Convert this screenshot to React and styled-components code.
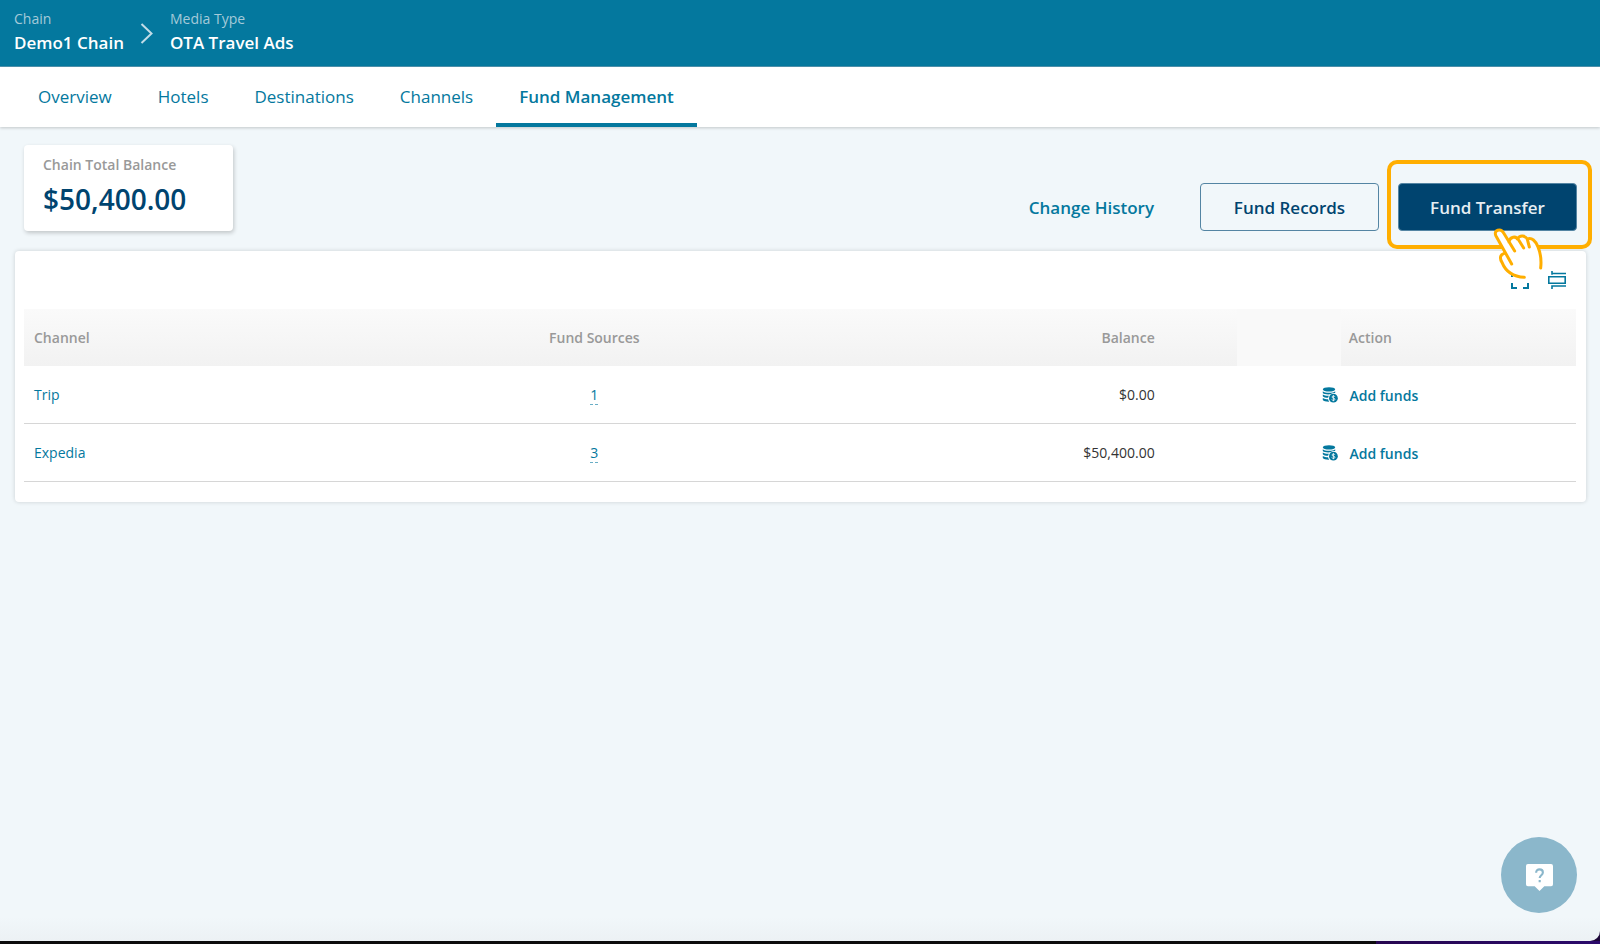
import React from 'react';
import styled, { createGlobalStyle } from 'styled-components';

const tabs = ['Overview', 'Hotels', 'Destinations', 'Channels', 'Fund Management'];

const channels = [
    { name: 'Trip', sources: 1, balance: '$0.00' },
    { name: 'Expedia', sources: 3, balance: '$50,400.00' },
];

function ChevronIcon() {
    return (
        <svg width="14" height="22" viewBox="0 0 14 22" fill="none" stroke="currentColor" strokeWidth="2">
            <path d="M1.500 2l10 9.500-10 9.500" />
        </svg>
    );
}

function CoinsIcon() {
    return (
        <svg width="16" height="16" viewBox="0 0 16 16" fill="currentColor">
            <ellipse cx="7" cy="2.4" rx="6.2" ry="2.2" />
            <path d="M.8 4.2c1 1.1 3.4 1.6 6.2 1.6s5.2-.5 6.2-1.6v1.9c-1.600-.3-3.4.1-4.7 1.2-3 .3-6.700 0-7.700-1.300z" />
            <path d="M.8 7.500c1.200 1 3.600 1.400 6.100 1.300-.4.700-.7 1.300-.8 2-2.400 0-4.500-.5-5.300-1.500z" />
            <path d="M.8 11c1.200.9 3.200 1.200 5.300 1.200.1.900.5 1.800 1.100 2.600-3 .1-5.600-.5-6.400-1.700z" />
            <circle cx="11.400" cy="11.200" r="4.400" />
            <path d="M12.900 9.800c-.3-.6-.8-.8-1.500-.8-.8 0-1.400.4-1.400 1 0 1.500 2.900.7 2.900 2.300 0 .7-.6 1.100-1.500 1.100-.8 0-1.400-.3-1.600-.9M11.400 8.200v6" fill="none" stroke="#fff" strokeWidth="0.8" />
        </svg>
    );
}

function FullscreenIcon() {
    return (
        <svg width="20" height="20" viewBox="0 0 20 20" fill="none" stroke="currentColor" strokeWidth="2">
            <path d="M2 7V2h5M13 2h5v5M18 13v5h-5M7 18H2v-5" />
        </svg>
    );
}

function DensityIcon() {
    return (
        <svg width="20" height="20" viewBox="0 0 20 20" fill="none" stroke="currentColor" strokeWidth="1.600">
            <path d="M1.800 6.800h16.400v6.400H1.800zM5 1v3.800M4.200 3.500h14.800M4.200 16h14.800M5 15.500V19" />
        </svg>
    );
}

function HelpIcon() {
    return (
        <svg width="27" height="27" viewBox="0 0 28 28">
            <path d="M2 0h24a2 2 0 0 1 2 2v19a2 2 0 0 1-2 2h-7l-5 5-5-5H2a2 2 0 0 1-2-2V2a2 2 0 0 1 2-2z" fill="#fff" />
            <path d="M10.500 9c0-2 1.400-3.400 3.500-3.400s3.500 1.300 3.500 3.200c0 2.700-3.300 2.900-3.300 5.700M14.200 16.500v2.400" fill="none" stroke="#8bb7cb" strokeWidth="2.200" />
        </svg>
    );
}

function HandIcon() {
    return (
        <svg width="90" height="76" viewBox="0 0 270 228" fill="none" stroke="#ffae00" strokeWidth="9" strokeLinecap="round" strokeLinejoin="round">
            <path d="M24 42C16 24 38 18 46 33L64 57C68 45 82 42 90 50 98 38 112 40 119 51 146 42 162 96 158 138L121 180 108 166C70 168 58 150 48 132L38 112C34 102 40 96 49 94z" fill="#fff" stroke="none" />
            <path d="M71 126L24 42C15 23 39 18 47 33L80 87M63 60C65 44 84 40 92 54L107 78M88 51C96 37 112 40 118 52L124 75M118 51C145 40 163 96 158 138M49 94C35 98 35 110 42 121 54 151 75 164 109 166" />
        </svg>
    );
}

function App() {
    return (
        <Page>
            <GlobalStyle />
            <Header>
                <Crumb>
                    <span>Chain</span>
                    <strong>Demo1 Chain</strong>
                </Crumb>
                <ChevronIcon />
                <Crumb>
                    <span>Media Type</span>
                    <strong>OTA Travel Ads</strong>
                </Crumb>
            </Header>

            <Nav>
                {tabs.map((tab) => (
                    <Tab key={tab} href="#" $active={tab === 'Fund Management'}>{tab}</Tab>
                ))}
            </Nav>

            <Content>
                <Toolbar>
                    <BalanceCard>
                        <h2>Chain Total Balance</h2>
                        <p>$50,400.00</p>
                    </BalanceCard>
                    <Actions>
                        <HistoryLink href="#">Change History</HistoryLink>
                        <Button>Fund Records</Button>
                        <Highlight>
                            <Button $primary>Fund Transfer</Button>
                            <Pointer><HandIcon /></Pointer>
                        </Highlight>
                    </Actions>
                </Toolbar>

                <Panel>
                    <PanelTools>
                        <IconButton aria-label="Full screen"><FullscreenIcon /></IconButton>
                        <IconButton aria-label="Row density"><DensityIcon /></IconButton>
                    </PanelTools>
                    <Table>
                        <thead>
                            <tr>
                                <HeadCell>Channel</HeadCell>
                                <HeadCell $align="center">Fund Sources</HeadCell>
                                <HeadCell $align="right">Balance</HeadCell>
                                <HeadCell $align="center" $wide>Action</HeadCell>
                            </tr>
                        </thead>
                        <tbody>
                            {channels.map((channel) => (
                                <tr key={channel.name}>
                                    <Cell><ChannelLink href="#">{channel.name}</ChannelLink></Cell>
                                    <Cell $align="center"><SourceLink href="#">{channel.sources}</SourceLink></Cell>
                                    <Cell $align="right">{channel.balance}</Cell>
                                    <Cell $align="center">
                                        <AddButton><CoinsIcon />Add funds</AddButton>
                                    </Cell>
                                </tr>
                            ))}
                        </tbody>
                    </Table>
                </Panel>
            </Content>

            <HelpButton aria-label="Help"><HelpIcon /></HelpButton>
            <BottomEdge />
        </Page>
    );
}

const GlobalStyle = createGlobalStyle`
  * {
    box-sizing: border-box;
  }

  body {
    margin: 0;
    font-family: 'Open Sans', 'Noto Sans', sans-serif;
    font-size: 14px;
    color: #333;
    background: #1c0638;
  }

  a {
    text-decoration: none;
  }

  button {
    font-family: inherit;
    cursor: pointer;
  }

  svg {
    display: block;
    flex: none;
  }
`;

const Page = styled.div`
  display: flex;
  flex-direction: column;
  min-height: 100vh;
`;

const Header = styled.header`
  display: flex;
  align-items: center;
  gap: 16px;
  height: 67px;
  padding: 0 14px;
  background: #04789e;
  border-bottom: 1px solid #4f94b0;
  color: #c2dce7;
`;

const Crumb = styled.div`
  display: flex;
  flex-direction: column;
  padding-bottom: 4px;
  line-height: 24px;

  span {
    font-size: 14px;
    color: #a5cad9;
  }

  strong {
    font-size: 17px;
    font-weight: 600;
    color: #fff;
  }
`;

const Nav = styled.nav`
  display: flex;
  height: 60px;
  padding: 0 15px;
  background: #fff;
  box-shadow: 0 1px 3px rgba(0, 0, 0, 0.2);
  z-index: 1;
`;

const Tab = styled.a`
  display: flex;
  align-items: center;
  padding: 2px 23px 0;
  border-bottom: 4px solid ${({ $active }) => ($active ? '#04789e' : 'transparent')};
  font-size: 17px;
  font-weight: ${({ $active }) => ($active ? 600 : 400)};
  color: #04789e;
`;

const Content = styled.main`
  flex: 1;
  padding: 18px 14px 0 15px;
  background: linear-gradient(transparent calc(100% - 24px), #ecf1f4), #f1f7fa;
  border-bottom-right-radius: 10px;
`;

const Toolbar = styled.div`
  display: flex;
  justify-content: space-between;
  align-items: flex-end;
  padding: 0 9px 20px;
`;

const BalanceCard = styled.section`
  width: 209px;
  height: 86px;
  padding: 9px 19px;
  background: #fff;
  border-radius: 4px;
  box-shadow: 1px 2px 4px rgba(0, 0, 0, 0.2);

  h2 {
    margin: 0;
    font-size: 14px;
    line-height: 22px;
    font-weight: 600;
    color: #999;
  }

  p {
    margin: 3px 0 0;
    font-size: 28px;
    line-height: 40px;
    font-weight: 600;
    color: #00446f;
  }
`;

const Actions = styled.div`
  display: flex;
  align-items: center;
`;

const HistoryLink = styled.a`
  margin-right: 46px;
  font-size: 17px;
  font-weight: 600;
  color: #04789e;
`;

const Button = styled.button`
  width: 179px;
  height: 48px;
  border: 1px solid #5485a3;
  border-radius: 4px;
  background: ${({ $primary }) => ($primary ? '#00446f' : 'transparent')};
  color: ${({ $primary }) => ($primary ? '#e6eef3' : '#00446f')};
  font-size: 17px;
  font-weight: 600;
`;

const Highlight = styled.div`
  position: relative;
  margin-left: 19px;

  &::before {
    content: '';
    position: absolute;
    inset: -23px -15px -18px -11px;
    border: 4px solid #ffae00;
    border-radius: 10px;
    pointer-events: none;
  }
`;

const Pointer = styled.div`
  position: absolute;
  top: 39px;
  left: 90px;
  pointer-events: none;
`;

const Panel = styled.section`
  padding: 0 10px 20px 9px;
  background: #fff;
  border-radius: 4px;
  box-shadow: 0 0 4px rgba(0, 0, 0, 0.16);
`;

const PanelTools = styled.div`
  display: flex;
  justify-content: flex-end;
  align-items: center;
  gap: 17px;
  height: 58px;
  padding-right: 9px;
`;

const IconButton = styled.button`
  padding: 0;
  border: 0;
  background: none;
  color: #04789e;
`;

const Table = styled.table`
  width: 100%;
  table-layout: fixed;
  border-collapse: separate;
  border-spacing: 0;

  thead {
    background: linear-gradient(#fafafa, #f2f2f2);
  }
`;

const HeadCell = styled.th`
  width: ${({ $wide }) => ($wide ? '26.5%' : '24.5%')};
  height: 57px;
  padding: 0 10px;
  background: ${({ $wide }) => ($wide ? 'linear-gradient(#f9f9f9, #f9f9f9) 72px 0 / 104px 100% no-repeat' : 'none')};
  text-align: ${({ $align }) => $align || 'left'};
  font-weight: 600;
  color: #999;
`;

const Cell = styled.td`
  height: 58px;
  padding: 0 10px;
  border-bottom: 1px solid #d6d6d6;
  text-align: ${({ $align }) => $align || 'left'};
`;

const ChannelLink = styled.a`
  color: #04789e;
`;

const SourceLink = styled.a`
  color: #04789e;
  border-bottom: 1px dashed #69aec6;
`;

const AddButton = styled.button`
  display: inline-flex;
  align-items: center;
  gap: 11px;
  padding: 0;
  border: 0;
  background: none;
  font-size: 14px;
  font-weight: 600;
  color: #04789e;
  vertical-align: middle;
`;

const HelpButton = styled.button`
  position: fixed;
  right: 23px;
  bottom: 31px;
  display: flex;
  align-items: center;
  justify-content: center;
  width: 76px;
  height: 76px;
  padding: 4px 0 0;
  border: 0;
  border-radius: 50%;
  background: #8bb7cb;
`;

const BottomEdge = styled.div`
  height: 3px;
  background: linear-gradient(90deg, #0c0c0c 86%, #260650 86%, #2b0a6b);
`;

export default App;
